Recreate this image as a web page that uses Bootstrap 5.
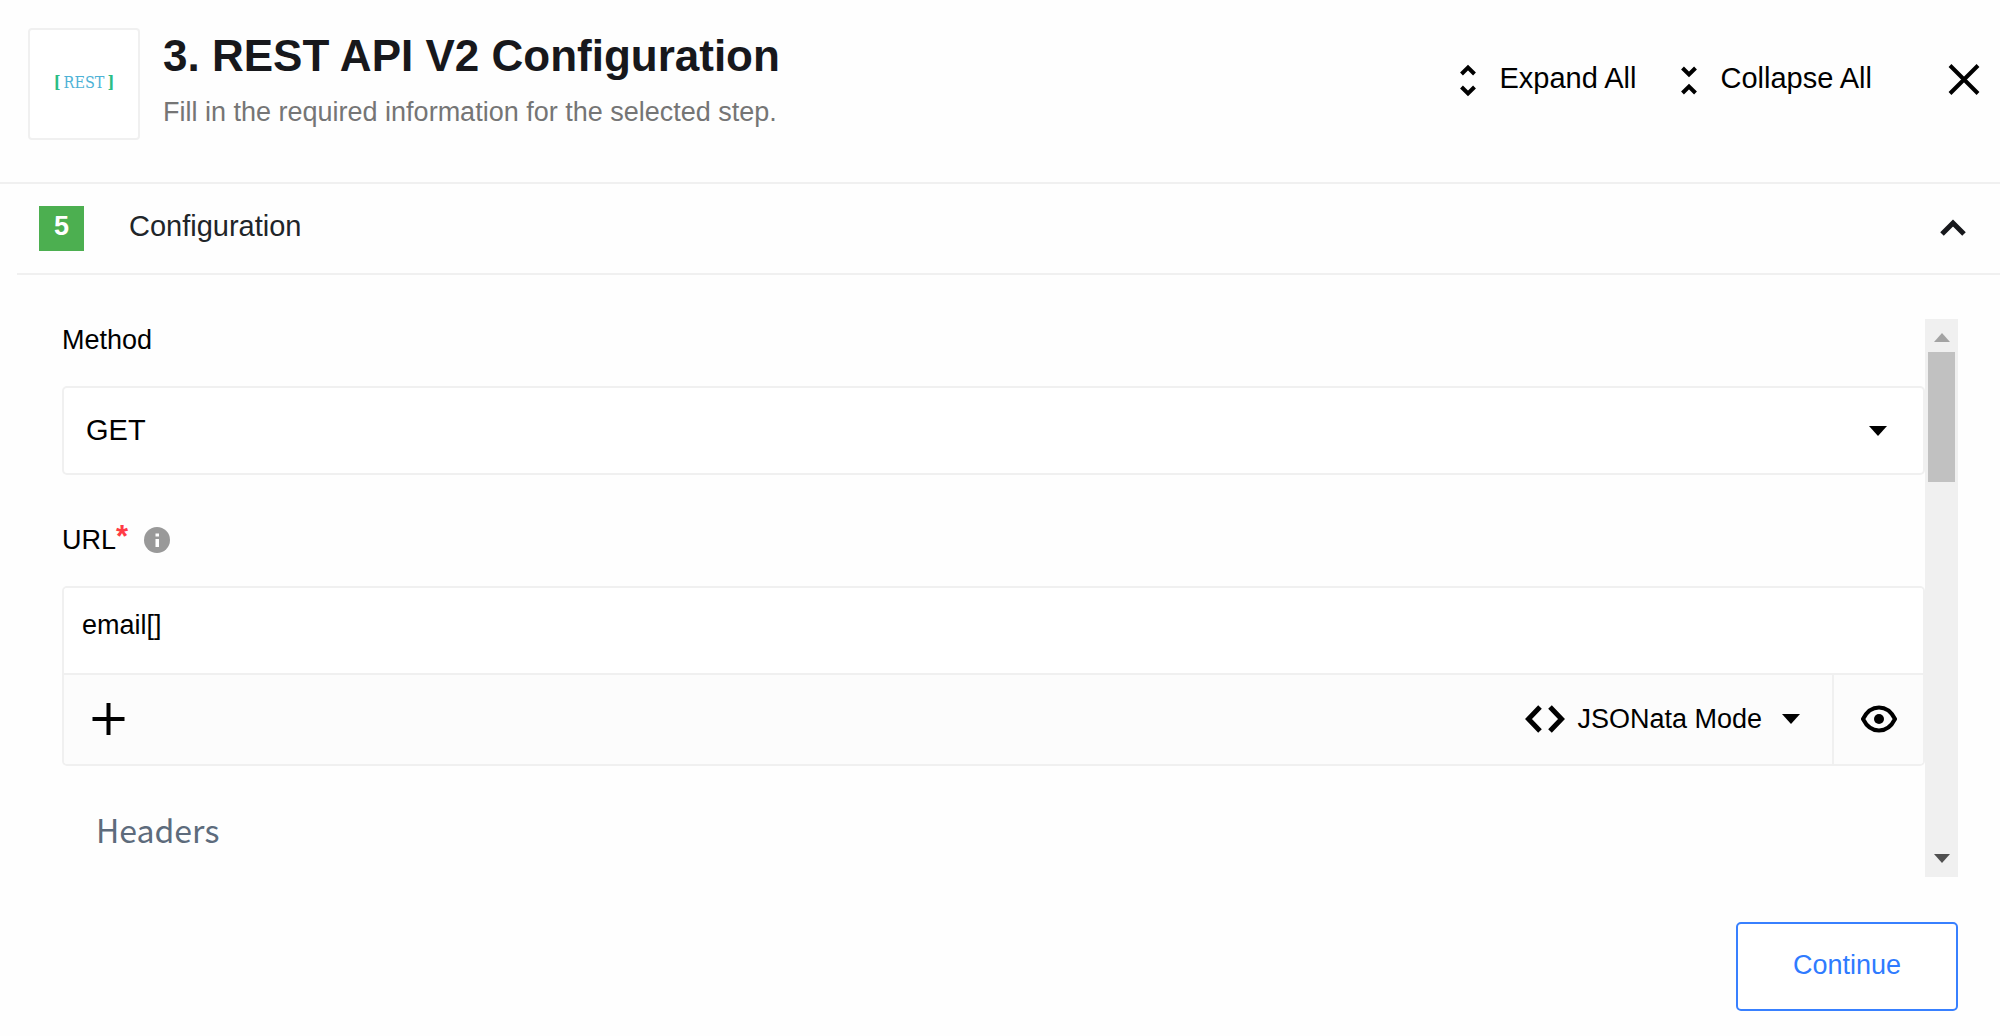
<!DOCTYPE html>
<html lang="en">
<head>
<meta charset="utf-8">
<meta name="viewport" content="width=device-width, initial-scale=1">
<title>REST API V2 Configuration</title>
<link href="https://cdn.jsdelivr.net/npm/bootstrap@5.3.0/dist/css/bootstrap.min.css" rel="stylesheet">
<style>
  :root { --line: #f0f0f0; --ink: #17181c; }
  body { font-family: "Liberation Sans", Arial, sans-serif; font-size: 27px; line-height: 42px; color: #000; background: #fefefe; }
  svg { display: block; flex: none; }
  button { color: inherit; }
  .plain-btn { background: none; border: 0; padding: 0; display: flex; align-items: center; }
  .step-head { padding: 28px 19px 42px 28px; border-bottom: 2px solid var(--line); }
  .step-logo { width: 112px; height: 112px; padding-bottom: 2px; border: 2px solid var(--line); border-radius: 4px; background: #fff; font-family: "DejaVu Serif Condensed", "DejaVu Serif", serif; font-size: 16px; line-height: 24px; color: #4db2d6; gap: 3px; }
  .step-logo b { color: #2bbd85; }
  .step-title { font-size: 44px; line-height: 56px; font-weight: 700; color: var(--ink); }
  .step-sub { line-height: 56px; color: #757575; }
  .step-text { margin-left: 23px; }
  .head-tools { padding-top: 30px; font-size: 29px; line-height: 40px; gap: 45px; }
  .tool-name { padding-left: 23px; }
  .close-btn { margin-left: 30px; }
  .section-bar { margin-left: 17px; padding: 21px 33px 22px 22px; border-bottom: 2px solid var(--line); font-size: 29px; color: #212529; }
  .section-num { width: 45px; height: 45px; padding-bottom: 4px; background: #4caf50; color: #fff; font-size: 27px; font-weight: 700; }
  .section-name { margin-left: 45px; padding-bottom: 4px; }
  .section-body { padding: 44px 42px 24px 62px; }
  .field { margin-bottom: 44px; }
  .field-label { margin-bottom: 25px; }
  .star { color: #ff3b45; font-size: 31px; font-weight: 700; line-height: 0; vertical-align: 2px; }
  .method-select { height: 89px; padding: 0 60px 0 22px; border: 2px solid var(--line); border-radius: 5px; font-size: 29px; color: #000; background-color: #fff; background-image: url("data:image/svg+xml,%3csvg xmlns='http://www.w3.org/2000/svg' viewBox='0 0 18 10'%3e%3cpath d='M0 0h18l-9 10z'/%3e%3c/svg%3e"); background-size: 18px 10px; background-position: right 36px center; }
  .expr-box { border: 2px solid var(--line); border-radius: 5px; overflow: hidden; }
  .expr-input { height: 85px; padding: 0 18px 10px; border: 0; border-radius: 0; font-size: 27px; color: #000; background: #fff; }
  .expr-bar { height: 91px; border-top: 2px solid var(--line); background: #fcfcfc; }
  .expr-bar .plain-btn { padding-bottom: 2px; }
  .mode-btn { padding-right: 32px; }
  .mode-name { padding: 0 20px 0 12px; }
  .eye-btn { width: 91px; border-left: 2px solid var(--line); justify-content: center; }
  .sub-head { margin: 0; padding: 0 0 29px 34px; font-family: "Noto Sans CJK SC", "Noto Sans", sans-serif; font-size: 32px; line-height: 38px; font-weight: 400; color: #5d6b7c; }
  .rail { width: 33px; background: #f0f0f0; padding: 14px 3px; }
  .rail-thumb { height: 130px; margin-top: 10px; background: #c1c1c1; }
  .next-btn { width: 222px; height: 89px; margin-top: 45px; padding-bottom: 8px; border: 2px solid #3880ff; border-radius: 5px; font-size: 27px; color: #2f7bff; background: #fff; }
</style>
</head>
<body>
<header class="step-head d-flex align-items-start">
  <div class="step-logo d-flex align-items-center justify-content-center flex-shrink-0"><b>[</b><span>REST</span><b>]</b></div>
  <div class="step-text flex-grow-1">
    <h1 class="step-title m-0">3. REST API V2 Configuration</h1>
    <p class="step-sub m-0">Fill in the required information for the selected step.</p>
  </div>
  <div class="head-tools d-flex align-items-center">
    <button class="plain-btn" type="button">
      <svg width="16" height="40" viewBox="0 0 16 40" fill="none" stroke="#000" stroke-width="4"><path d="M1.500 16 8 9.500l6.500 6.500M1.500 29 8 35.500l6.500-6.500"/></svg>
      <span class="tool-name">Expand All</span>
    </button>
    <button class="plain-btn" type="button">
      <svg width="16" height="40" viewBox="0 0 16 40" fill="none" stroke="#000" stroke-width="4"><path d="M1.500 10 8 16.500l6.500-6.500M1.500 35 8 28.500l6.500 6.500"/></svg>
      <span class="tool-name">Collapse All</span>
    </button>
    <button class="plain-btn close-btn" type="button" aria-label="Close">
      <svg width="34" height="40" viewBox="0 0 34 40" fill="none" stroke="#000" stroke-width="4"><path d="M3 7.500l28 28M31 7.500l-28 28"/></svg>
    </button>
  </div>
</header>

<main>
  <div class="section-bar d-flex align-items-center">
    <span class="section-num d-flex align-items-center justify-content-center">5</span>
    <span class="section-name flex-grow-1">Configuration</span>
    <button class="plain-btn" type="button" aria-label="Collapse section">
      <svg width="28" height="20" viewBox="0 0 28 20" fill="none" stroke="#17181c" stroke-width="5"><path d="M3 16 14 5l11 11"/></svg>
    </button>
  </div>

  <form class="section-body">
    <div class="d-flex">
      <div class="flex-grow-1">
        <div class="field">
          <label class="field-label d-block" for="method">Method</label>
          <select class="form-select method-select" id="method"><option>GET</option></select>
        </div>
        <div class="field">
          <div class="field-label d-flex align-items-center">
            <label for="url">URL<span class="star">*</span></label>
            <svg class="ms-3" width="26" height="26" viewBox="0 0 26 26"><circle cx="13" cy="13" r="13" fill="#999"/><path d="M11.500 6.500h3.500v3h-3.500zM11.500 12h3.500v8h-3.500z" fill="#fff"/></svg>
          </div>
          <div class="expr-box">
            <input class="form-control expr-input" id="url" type="text" value="email[]">
            <div class="expr-bar d-flex">
              <button class="plain-btn ps-4 pe-3" type="button" aria-label="Add">
                <svg width="40" height="40" viewBox="0 0 40 40" fill="none" stroke="#000" stroke-width="4"><path d="M4.500 20h32M20.500 4v32"/></svg>
              </button>
              <button class="plain-btn mode-btn ms-auto" type="button">
                <svg width="40" height="28" viewBox="0 0 40 28" fill="none" stroke="#000" stroke-width="5"><path d="M15 2 3.500 14 15 26M25 2l11.500 12L25 26"/></svg>
                <span class="mode-name">JSONata Mode</span>
                <svg width="18" height="10" viewBox="0 0 18 10"><path d="M0 0h18l-9 10z"/></svg>
              </button>
              <button class="plain-btn eye-btn" type="button" aria-label="Preview">
                <svg width="36" height="28" viewBox="0 0 36 28"><path d="M2 14C6 6 12 2.500 18 2.500S30 6 34 14c-4 8-10 11.500-16 11.500S6 22 2 14z" fill="none" stroke="#000" stroke-width="4"/><circle cx="18" cy="14" r="5"/></svg>
              </button>
            </div>
          </div>
        </div>
        <h2 class="sub-head">Headers</h2>
      </div>
      <div class="rail d-flex flex-column" aria-hidden="true">
        <svg class="align-self-center" width="16" height="9" viewBox="0 0 16 9"><path d="M0 9h16L8 0z" fill="#a3a3a3"/></svg>
        <div class="rail-thumb"></div>
        <svg class="mt-auto align-self-center" width="16" height="9" viewBox="0 0 16 9"><path d="M0 0h16L8 9z" fill="#505050"/></svg>
      </div>
    </div>
    <div class="d-flex justify-content-end">
      <button class="btn next-btn" type="button">Continue</button>
    </div>
  </form>
</main>
<script src="https://cdn.jsdelivr.net/npm/bootstrap@5.3.0/dist/js/bootstrap.bundle.min.js"></script>
</body>
</html>
